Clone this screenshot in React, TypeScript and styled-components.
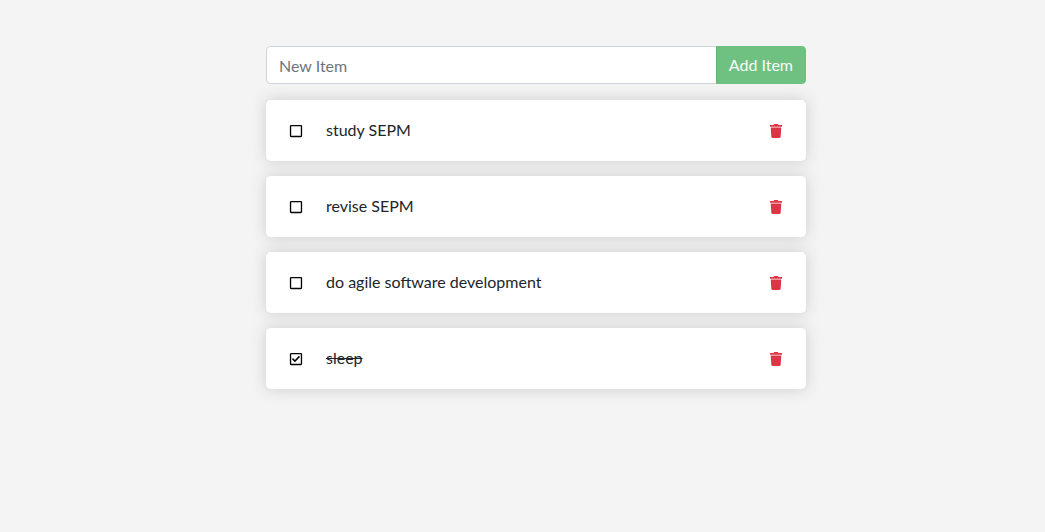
import React, { useState } from "react";
import styled, { createGlobalStyle } from "styled-components";
import { FaRegCheckSquare, FaRegSquare, FaTrash } from "react-icons/fa";

const GlobalStyle = createGlobalStyle`
  *, *::before, *::after { box-sizing: border-box; }
  body {
    margin: 0;
    background: #f4f4f4;
    color: #212529;
    font-family: Lato, "Liberation Sans", sans-serif;
    font-size: 16px;
    line-height: 24px;
  }
`;

const Page = styled.main`
  padding: 46px 0 50px 27px;
`;

const Column = styled.div`
  width: 100%;
  max-width: 540px;
  margin: 0 auto;
`;

const AddForm = styled.form`
  display: flex;
  margin-bottom: 16px;
`;

const NewItemInput = styled.input`
  flex: 1;
  min-width: 0;
  height: 38px;
  padding: 6px 12px;
  border: 1px solid #ced4da;
  border-radius: 4px 0 0 4px;
  background: #fff;
  color: #495057;
  font: inherit;

  &::placeholder {
    color: #6c757d;
    opacity: 1;
  }
`;

const AddButton = styled.button`
  height: 38px;
  margin-left: -1px;
  padding: 6px 12px;
  border: 1px solid #28a745;
  border-radius: 0 4px 4px 0;
  background: #28a745;
  color: #fff;
  font: inherit;
  white-space: nowrap;

  &:disabled {
    opacity: 0.65;
  }
`;

const List = styled.ul`
  display: flex;
  flex-direction: column;
  gap: 15px;
  margin: 0;
  padding: 0;
  list-style: none;
`;

const Item = styled.li`
  display: flex;
  align-items: center;
  min-height: 61px;
  padding: 15px 23px;
  border-radius: 5px;
  background: #fff;
  box-shadow: 0 0 1em #ccc;
`;

const ItemLabel = styled.label`
  position: relative;
  flex: 1;
  display: flex;
  align-items: center;
  gap: 23px;

  svg {
    display: block;
    width: 14px;
    height: 14px;
    color: #000;
  }
`;

const ItemName = styled.span<{ $done: boolean }>`
  padding-bottom: 1px;
  text-decoration: ${(p) => (p.$done ? "line-through" : "none")};
`;

const Checkbox = styled.input`
  position: absolute;
  left: 0;
  width: 14px;
  height: 14px;
  margin: 0;
  opacity: 0;
`;

const RemoveButton = styled.button`
  padding: 0;
  border: 0;
  background: transparent;
  color: #dc3545;

  svg {
    display: block;
    width: 14px;
    height: 14px;
  }
`;

interface Todo {
  id: number;
  name: string;
  done: boolean;
}

const initialTodos: Todo[] = [
  { id: 1, name: "study SEPM", done: false },
  { id: 2, name: "revise SEPM", done: false },
  { id: 3, name: "do agile software development", done: false },
  { id: 4, name: "sleep", done: true },
];

export default function App() {
  const [todos, setTodos] = useState(initialTodos);
  const [name, setName] = useState("");

  const add = (e: React.FormEvent) => {
    e.preventDefault();
    setTodos([...todos, { id: Date.now(), name, done: false }]);
    setName("");
  };
  const toggle = (id: number) =>
    setTodos(todos.map((t) => (t.id === id ? { ...t, done: !t.done } : t)));
  const remove = (id: number) => setTodos(todos.filter((t) => t.id !== id));

  return (
    <>
      <GlobalStyle />
      <Page>
        <Column>
          <AddForm onSubmit={add}>
            <NewItemInput
              type="text"
              placeholder="New Item"
              aria-label="New item"
              value={name}
              onChange={(e) => setName(e.target.value)}
            />
            <AddButton type="submit" disabled={!name.length}>
              Add Item
            </AddButton>
          </AddForm>
          <List>
            {todos.map((todo) => (
              <Item key={todo.id}>
                <ItemLabel>
                  <Checkbox
                    type="checkbox"
                    checked={todo.done}
                    onChange={() => toggle(todo.id)}
                  />
                  {todo.done ? <FaRegCheckSquare /> : <FaRegSquare />}
                  <ItemName $done={todo.done}>{todo.name}</ItemName>
                </ItemLabel>
                <RemoveButton
                  type="button"
                  aria-label={`Remove ${todo.name}`}
                  onClick={() => remove(todo.id)}
                >
                  <FaTrash />
                </RemoveButton>
              </Item>
            ))}
          </List>
        </Column>
      </Page>
    </>
  );
}
